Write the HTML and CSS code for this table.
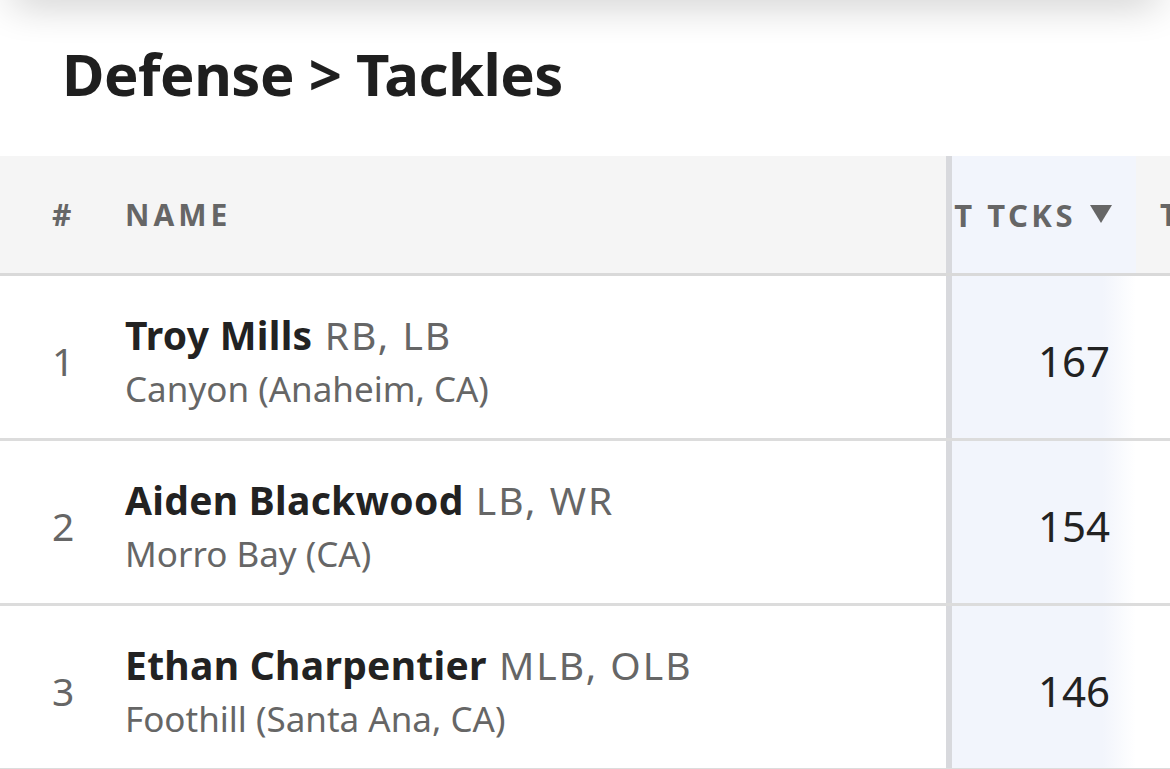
FILE: index.html
```html
<!DOCTYPE html>
<html lang="en">
<head>
<meta charset="utf-8">
<title>Defense &gt; Tackles</title>
<link rel="stylesheet" href="styles.css">
</head>
<body>
<div class="topbar"></div>
<h1 class="title">Defense &gt; Tackles</h1>
<div class="table">
  <div class="row head">
    <div class="cell rank">#</div>
    <div class="cell name">NAME</div>
    <div class="cell stat"><span class="label">T TCKS</span><svg class="arrow" width="22" height="18" viewBox="0 0 22 18"><path d="M0 0 H22 L11 18 Z" fill="#666666"/></svg></div>
    <div class="cell more"><span>T</span></div>
  </div>
  <div class="row">
    <div class="cell rank">1</div>
    <div class="cell name">
      <div class="player"><b>Troy Mills</b> <span class="pos">RB, LB</span></div>
      <div class="school">Canyon (Anaheim, CA)</div>
    </div>
    <div class="cell stat">167</div>
    <div class="cell more"></div>
  </div>
  <div class="row">
    <div class="cell rank">2</div>
    <div class="cell name">
      <div class="player"><b>Aiden Blackwood</b> <span class="pos">LB, WR</span></div>
      <div class="school">Morro Bay (CA)</div>
    </div>
    <div class="cell stat">154</div>
    <div class="cell more"></div>
  </div>
  <div class="row">
    <div class="cell rank">3</div>
    <div class="cell name">
      <div class="player"><b>Ethan Charpentier</b> <span class="pos">MLB, OLB</span></div>
      <div class="school">Foothill (Santa Ana, CA)</div>
    </div>
    <div class="cell stat">146</div>
    <div class="cell more"></div>
  </div>
</div>
</body>
</html>
```
FILE: styles.css
```css
html, body {
  margin: 0;
  padding: 0;
  background: #ffffff;
  overflow: hidden;
}
body {
  font-family: "Noto Sans", "Open Sans", sans-serif;
  color: #222222;
  width: 1170px;
  height: 769px;
}
.topbar {
  height: 20px;
  margin: -20px 12px 0;
  background: #ffffff;
  box-shadow: 0 0 40px rgba(0, 0, 0, 0.32);
}
.title {
  margin: 45px 0 0 62px;
  font-size: 58px;
  line-height: 58px;
  font-weight: 700;
  color: #1f1f1f;
  letter-spacing: -0.5px;
}
.table {
  margin-top: 53px;
  display: flex;
  flex-direction: column;
}
.row {
  display: grid;
  grid-template-columns: 125px 821px 190px 34px;
  height: 162px;
  border-bottom: 3px solid #dcdcdc;
  box-sizing: content-box;
}
.row.head {
  height: 117px;
  background: #f5f5f5;
  border-bottom-color: #d9d9d9;
}
.cell {
  display: flex;
  align-items: center;
  padding-top: 6px;
  box-sizing: border-box;
}
.head .cell {
  padding-top: 0;
  font-size: 30px;
  font-weight: 700;
  color: #666666;
  letter-spacing: 4px;
}
.rank {
  padding-left: 52px;
  font-size: 39px;
  color: #666666;
}
.name {
  flex-direction: column;
  align-items: flex-start;
  justify-content: center;
  padding-top: 10px;
}
.player {
  font-size: 39px;
  line-height: 54px;
  color: #666666;
  white-space: nowrap;
}
.player b {
  color: #222222;
  font-weight: 700;
  letter-spacing: 0.3px;
}
.pos {
  letter-spacing: 2px;
  margin-left: 2px;
}
.school {
  font-size: 35px;
  line-height: 54px;
  color: #666666;
  white-space: nowrap;
}
.stat {
  border-left: 6px solid #d8d9dd;
  background: linear-gradient(to right, #f2f5fc 0%, #f2f5fc 82%, #ffffff 100%);
  justify-content: flex-end;
  padding-right: 26px;
  font-size: 42px;
  color: #222222;
  overflow: hidden;
}
.head .stat {
  background: #f2f5fc;
  padding-right: 24px;
  white-space: nowrap;
  overflow: hidden;
  font-size: 31px;
}
.head .stat .label {
  letter-spacing: 3.5px;
}
.arrow {
  display: block;
  margin-left: 14px;
  margin-top: -2px;
}
.more {
  padding-left: 24px;
  overflow: hidden;
  white-space: nowrap;
}
.row:not(.head) .more {
  background: #ffffff;
}
```
